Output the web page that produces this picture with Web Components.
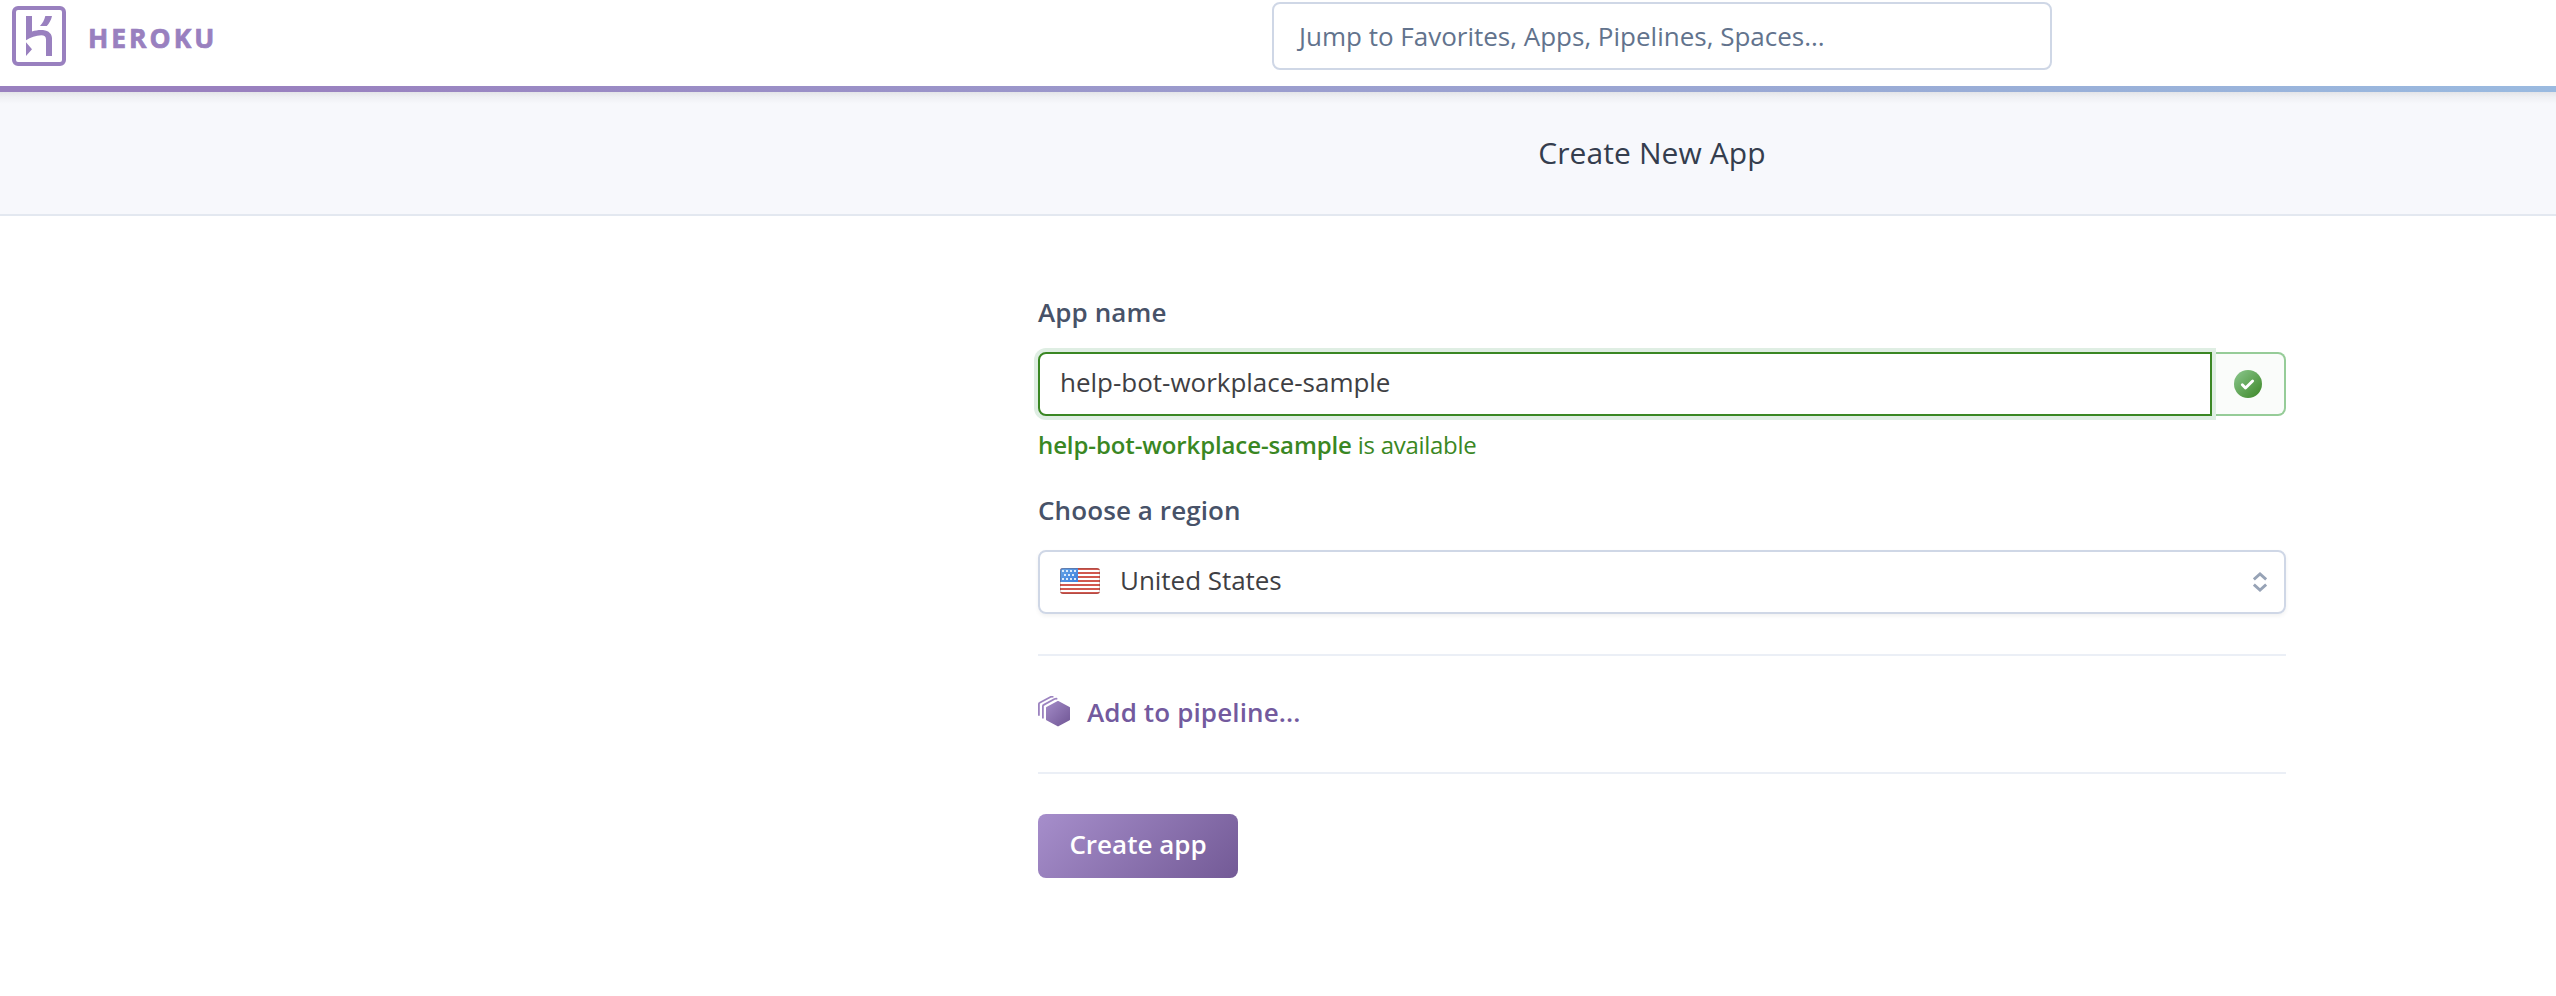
<!DOCTYPE html>
<html lang="en">
<head>
<meta charset="utf-8">
<title>Create New App | Heroku</title>
<style>
body { margin: 0; background: #fff; font: 26px/32px "Open Sans", "Noto Sans", sans-serif; color: #3f3f44; min-height: 996px; overflow: hidden; }
</style>
</head>
<body>
<hk-page>
  <hk-header slot="header" placeholder="Jump to Favorites, Apps, Pipelines, Spaces..."></hk-header>
  <hk-subheader slot="header">Create New App</hk-subheader>
  <hk-field label="App name">
    <hk-name-input>help-bot-workplace-sample</hk-name-input>
    <hk-status slot="note"><b>help-bot-workplace-sample</b> is available</hk-status>
  </hk-field>
  <hk-field label="Choose a region">
    <hk-select>United States</hk-select>
  </hk-field>
  <hk-pipeline>Add to pipeline...</hk-pipeline>
  <hk-button>Create app</hk-button>
</hk-page>
<script>
function define(name, html) {
  customElements.define(name, class extends HTMLElement {
    constructor() {
      super();
      const t = document.createElement('template');
      t.innerHTML = html;
      this.attachShadow({ mode: 'open' }).append(t.content.cloneNode(true));
      this.shadowRoot.querySelectorAll('[data-attr]').forEach(n => {
        n.textContent = this.getAttribute(n.dataset.attr);
      });
    }
  });
}

define('hk-page', `<style>
  :host { display: block; }
  main { width: 1248px; margin-left: 1038px; padding-top: 80px; display: flex; flex-direction: column; }
</style><slot name="header"></slot><main><slot></slot></main>`);

define('hk-logo', `<style>
  :host { display: flex; align-items: center; gap: 22px; color: #9980bf; font-weight: 700; font-size: 26.5px; letter-spacing: 3px; -webkit-text-stroke: .7px #9980bf; }
  svg { display: block; } span { padding-top: 3px; }
</style>
<svg width="54" height="60" viewBox="12 6 54 60"><rect x="14" y="8" width="50" height="56" rx="4" fill="none" stroke="currentColor" stroke-width="4"/>
<path fill="currentColor" d="M26 16H32V31.5C36 30.2 39.8 29.7 43 30.1C49 30.8 52 34.3 52 38.6V56H46V39.5C46 36.5 44.3 35.3 41.3 35.3C36 35.3 30.5 37.6 26 40.2ZM45.3 16H52C51.2 20 49.2 23.4 46.8 26H40C42.6 23 44.5 20 45.3 16ZM26 42.3L32 49.2L26 56Z"/></svg><span>HEROKU</span>`);

define('hk-header', `<style>
  :host { display: block; background: #fff; height: 92px; }
  .row { display: grid; grid-template-columns: 1260px 780px; padding: 2px 0 0 12px; height: 84px; align-items: start; }
  hk-logo { height: 68px; }
  .search { box-sizing: border-box; height: 68px; border: 2px solid #cfd7e6; border-radius: 8px; padding: 16px 25px; color: #62738d; }
  .bar { height: 6px; background: linear-gradient(90deg, #9980bf 0, #9980bf 10%, #9b9dce 50%, #99afd8 80%, #9abae0 100%); }
</style><div class="row"><hk-logo></hk-logo><div class="search" data-attr="placeholder"></div></div><div class="bar"></div>`);

define('hk-subheader', `<style>
  :host { display: block; box-sizing: border-box; height: 124px; background: linear-gradient(#e3e4e8, #eff0f4 5px, #f7f8fc 12px); border-bottom: 2px solid #e3e8f0; padding: 45px 0 0 748px; text-align: center; font-size: 30px; letter-spacing: .1px; color: #343d4e; }
</style><slot></slot>`);

define('hk-field', `<style>
  :host { display: block; margin-bottom: 33px; }
  :host(:nth-of-type(2)) { margin-bottom: 40px; }
  .label { font-weight: 600; color: #475268; margin-bottom: 24px; letter-spacing: .1px; }
</style><div class="label" data-attr="label"></div><slot></slot><slot name="note"></slot>`);

define('hk-name-input', `<style>
  :host { display: flex; height: 64px; }
  .box { box-sizing: border-box; width: 1174px; border: 2px solid #3a8723; border-radius: 8px 0 0 8px; padding: 12px 20px; letter-spacing: -.02px; box-shadow: 0 0 0 4px #dfeee3; z-index: 1; background: #fff; }
  .ok { box-sizing: border-box; flex: 1; border: 2px solid #96cc98; border-left: 0; border-radius: 0 8px 8px 0; background: #fafcfa; display: flex; align-items: center; padding-left: 22px; }
</style><div class="box"><slot></slot></div><div class="ok">
<svg width="28" height="28" viewBox="0 0 28 28"><defs><linearGradient id="g" x1="0" y1="0" x2="1" y2="1"><stop stop-color="#8cc88f"/><stop offset="1" stop-color="#3b8625"/></linearGradient></defs><circle cx="14" cy="14" r="14" fill="url(#g)"/><path d="M8.3 14.7l3.2 3.3 7.1-7" fill="none" stroke="#fff" stroke-width="2.9" stroke-linecap="round" stroke-linejoin="round"/></svg></div>`);

define('hk-status', `<style>
  :host { display: block; margin-top: 13px; font-size: 24px; color: #3a8723; letter-spacing: -.28px; }
  ::slotted(b) { font-weight: 600; letter-spacing: -.11px; }
</style><slot></slot>`);

define('hk-flag', `<style>:host, svg { display: block; }</style>
<svg width="40" height="26" viewBox="0 0 40 26"><defs><clipPath id="c"><rect width="40" height="26" rx="3"/></clipPath>
<linearGradient id="b" x1="0" y1="0" x2="1" y2="1"><stop stop-color="#66a4e6"/><stop offset="1" stop-color="#3f80dd"/></linearGradient>
<pattern id="s" width="40" height="4" patternUnits="userSpaceOnUse"><rect width="40" height="2" fill="#d1584f"/></pattern></defs>
<g clip-path="url(#c)"><rect width="40" height="26" fill="#fff"/><rect width="40" height="26" fill="url(#s)"/><rect width="18" height="14" fill="url(#b)"/>
<path d="M2 3h16M2 11h16" stroke="#dceafa" stroke-width="2" stroke-dasharray="2 2"/><path d="M4 7h12" stroke="#dceafa" stroke-width="2" stroke-dasharray="2 2"/></g>
<rect x=".5" y=".5" width="39" height="25" rx="2.6" fill="none" stroke="#60302c" stroke-opacity=".28"/></svg>`);

define('hk-select', `<style>
  :host { box-sizing: border-box; display: flex; height: 64px; border: 2px solid #cfd7e6; border-radius: 8px; box-shadow: 0 2px 4px rgba(0,0,0,.06); padding: 0 17px 0 20px; align-items: center; }
  .t { flex: 1; padding: 0 0 4px 20px; letter-spacing: -.04px; } hk-flag { margin-top: -2px; } svg { display: block; }
</style><hk-flag></hk-flag><span class="t"><slot></slot></span>
<svg width="14" height="20" viewBox="0 0 14 20" fill="none" stroke="#97a3b6" stroke-width="2.8"><path d="M.9 7.4L7 1.9l6.1 5.5M.9 12.6L7 18.1l6.1-5.5"/></svg>`);

define('hk-pipeline', `<style>
  :host { box-sizing: border-box; display: flex; height: 120px; border: solid #ebeff6; border-width: 2px 0; font-weight: 600; color: #735a9e; gap: 17px; padding-top: 40px; margin-bottom: 40px; letter-spacing: .13px; }
  svg { display: block; }
</style><svg width="32" height="31" viewBox="0 0 32 31"><defs><linearGradient id="p" x1="0" y1="0" x2="1" y2="1"><stop stop-color="#a28ac6"/><stop offset="1" stop-color="#715796"/></linearGradient></defs>
<path d="M20 5.8L31.2 11.7V23.5L20 29.6L8.8 23.5V11.7Z" fill="url(#p)" stroke="url(#p)" stroke-width="1.6" stroke-linejoin="round"/>
<path d="M.9 19.8V8.1Q.9 7.2 1.7 6.8L12.5 1Q13.6.4 15.4.8M4.9 22.5V10.2Q4.9 9.3 5.7 8.9L16.5 3Q17.6 2.5 19.3 2.8" fill="none" stroke="#9c83c0" stroke-width="1.8"/></svg><span><slot></slot></span>`);

define('hk-button', `<style>
  :host { box-sizing: border-box; display: block; width: 200px; height: 64px; border-radius: 8px; padding-top: 14px; text-align: center; background: linear-gradient(135deg, #a68ecb, #735a96); color: #fff; font-weight: 600; }
</style><slot></slot>`);
</script>
</body>
</html>
